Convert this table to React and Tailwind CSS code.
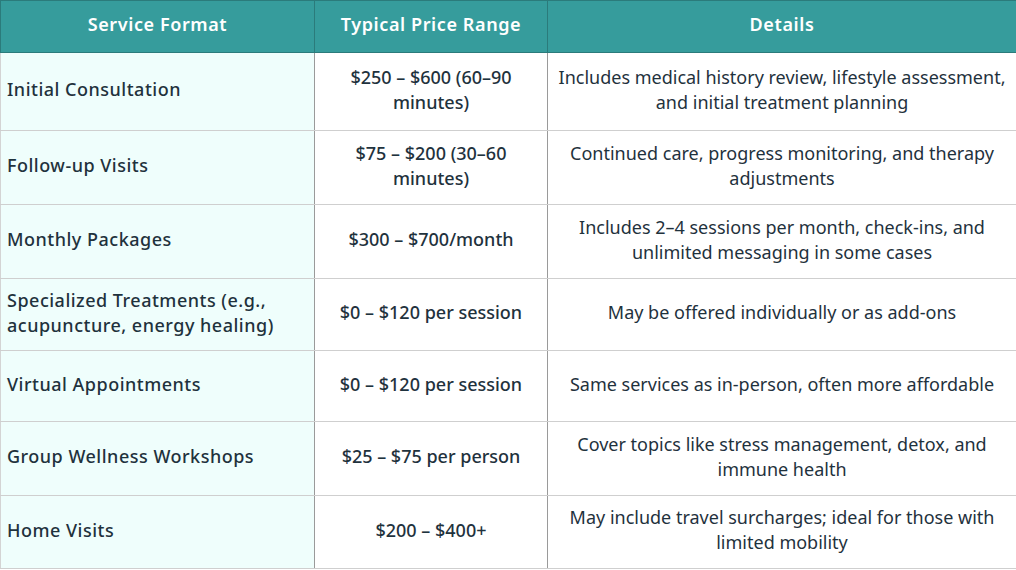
import React from "react";

const rows = [
  { h: "h-[78px]", a: "Initial Consultation", b: "$250 – $600 (60–90 minutes)", c: "Includes medical history review, lifestyle assessment, and initial treatment planning" },
  { h: "h-[74px]", a: "Follow-up Visits", b: "$75 – $200 (30–60 minutes)", c: "Continued care, progress monitoring, and therapy adjustments" },
  { h: "h-[74px]", a: "Monthly Packages", b: "$300 – $700/month", c: "Includes 2–4 sessions per month, check-ins, and unlimited messaging in some cases" },
  { h: "h-[72px]", a: "Specialized Treatments (e.g., acupuncture, energy healing)", b: "$0 – $120 per session", c: "May be offered individually or as add-ons" },
  { h: "h-[71px]", a: "Virtual Appointments", b: "$0 – $120 per session", c: "Same services as in-person, often more affordable" },
  { h: "h-[74px]", a: "Group Wellness Workshops", b: "$25 – $75 per person", c: "Cover topics like stress management, detox, and immune health" },
  { h: "h-[73px]", a: "Home Visits", b: "$200 – $400+", c: "May include travel surcharges; ideal for those with limited mobility" },
];

export default function App() {
  return (
    <div className="w-[1016px] h-[570px] bg-white overflow-hidden" style={{ fontFamily: '"Noto Sans", sans-serif' }}>
      <table className="w-[1016px] table-fixed border-collapse text-[18px] leading-[25px] text-[#1f323d]">
        <colgroup>
          <col className="w-[314px]" />
          <col className="w-[233px]" />
          <col className="w-[469px]" />
        </colgroup>
        <thead>
          <tr className="h-[52px] bg-[#369c9c] text-white">
            <th className="border border-[#2b7b7b] pb-[4px] font-semibold tracking-[0.6px] text-center">Service Format</th>
            <th className="border border-[#2b7b7b] pb-[4px] font-semibold tracking-[0.6px] text-center">Typical Price Range</th>
            <th className="border border-[#2b7b7b] pb-[4px] font-semibold tracking-[0.6px] text-center">Details</th>
          </tr>
        </thead>
        <tbody>
          {rows.map((r, i) => (
            <tr key={i} className={r.h}>
              <td className="border-y border-l border-y-[#cfcfcf] border-l-[#d4d4d4] border-r border-r-[#9a9a9a] bg-[#effefc] pl-[6px] pr-2 pb-[4px] font-medium tracking-[0.5px] text-left align-middle">{r.a}</td>
              <td className="border-y border-[#cfcfcf] border-r border-r-[#9a9a9a] px-3 pb-[4px] font-medium text-center align-middle">{r.b}</td>
              <td className="border-y border-[#cfcfcf] border-r border-r-[#c8c8c8] px-[6px] pb-[4px] font-normal text-center align-middle">{r.c}</td>
            </tr>
          ))}
        </tbody>
      </table>
    </div>
  );
}
